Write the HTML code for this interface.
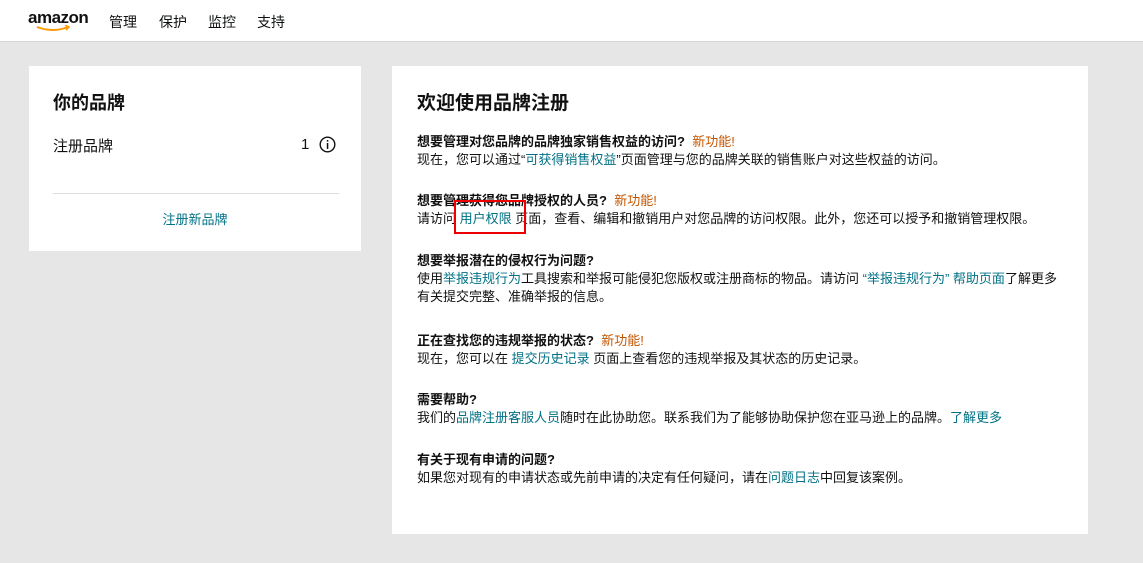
<!DOCTYPE html><html><head><meta charset="utf-8"><style>
body{margin:0;width:1143px;height:563px;background:#e6e6e6;font-family:"Liberation Sans","Noto Sans CJK SC",sans-serif;color:#111;overflow:hidden;position:relative}
.hd{position:absolute;left:0;top:0;width:1143px;height:41px;background:#fff;border-bottom:1px solid #d5d5d5}
.logo{position:absolute;left:28px;top:8px;font:bold 17px "Liberation Sans",sans-serif;letter-spacing:-0.5px}
.nav{position:absolute;top:12px;font-size:14px;color:#0f1111}
.card{position:absolute;background:#fff}
.l{left:29px;top:66px;width:332px;height:185px}
.r{left:392px;top:66px;width:696px;height:468px}
.a{color:#007185}.o{color:#c45500}
.p{position:absolute;left:25px;font-size:13px;line-height:18px;width:648px}
b{font-weight:bold}
</style></head><body>
<div class="hd"><div class="logo">amazon<svg style="position:absolute;left:8px;top:17px" width="36" height="8"><path d="M1 2 Q17 8 32 2" stroke="#f90" stroke-width="2" fill="none"/><path d="M29 0 L33 2 L30 5" stroke="#f90" stroke-width="1.5" fill="none"/></svg></div>
<span class="nav" style="left:109px">管理</span><span class="nav" style="left:159px">保护</span><span class="nav" style="left:208px">监控</span><span class="nav" style="left:257px">支持</span></div>
<div class="card l">
<div style="position:absolute;left:24px;top:23px;font-size:18px;font-weight:bold">你的品牌</div>
<div style="position:absolute;left:24px;top:69px;font-size:15px">注册品牌</div>
<div style="position:absolute;left:272px;top:70px;font-size:15px">1</div>
<svg style="position:absolute;left:290px;top:70px" width="17" height="17"><circle cx="8.5" cy="8.5" r="7.3" stroke="#111" stroke-width="1.4" fill="none"/><rect x="7.8" y="7" width="1.5" height="6" fill="#111"/><rect x="7.8" y="4" width="1.5" height="1.6" fill="#111"/></svg>
<div style="position:absolute;left:24px;top:127px;width:286px;border-top:1px solid #ddd"></div>
<div class="a" style="position:absolute;left:0;width:332px;text-align:center;top:143px;font-size:13px">注册新品牌</div>
</div>
<div class="card r">
<div style="position:absolute;left:25px;top:22px;font-size:19px;font-weight:bold">欢迎使用品牌注册</div>
<div class="p" style="top:67px"><b>想要管理对您品牌的品牌独家销售权益的访问?</b> &nbsp;<span class="o">新功能!</span><br>现在，您可以通过“<span class="a">可获得销售权益</span>”页面管理与您的品牌关联的销售账户对这些权益的访问。</div>
<div class="p" style="top:126px"><b>想要管理获得您品牌授权的人员?</b> &nbsp;<span class="o">新功能!</span><br>请访问 <span class="a">用户权限</span> 页面，查看、编辑和撤销用户对您品牌的访问权限。此外，您还可以授予和撤销管理权限。</div>
<div class="p" style="top:186px"><b>想要举报潜在的侵权行为问题?</b><br>使用<span class="a">举报违规行为</span>工具搜索和举报可能侵犯您版权或注册商标的物品。请访问 <span class="a">“举报违规行为” 帮助页面</span>了解更多有关提交完整、准确举报的信息。</div>
<div class="p" style="top:266px"><b>正在查找您的违规举报的状态?</b> &nbsp;<span class="o">新功能!</span><br>现在，您可以在 <span class="a">提交历史记录</span> 页面上查看您的违规举报及其状态的历史记录。</div>
<div class="p" style="top:325px"><b>需要帮助?</b><br>我们的<span class="a">品牌注册客服人员</span>随时在此协助您。联系我们为了能够协助保护您在亚马逊上的品牌。<span class="a">了解更多</span></div>
<div class="p" style="top:385px"><b>有关于现有申请的问题?</b><br>如果您对现有的申请状态或先前申请的决定有任何疑问，请在<span class="a">问题日志</span>中回复该案例。</div>
</div>
<div style="position:absolute;left:454px;top:200px;width:68px;height:30px;border:2.5px solid #e00"></div>
</body></html>
